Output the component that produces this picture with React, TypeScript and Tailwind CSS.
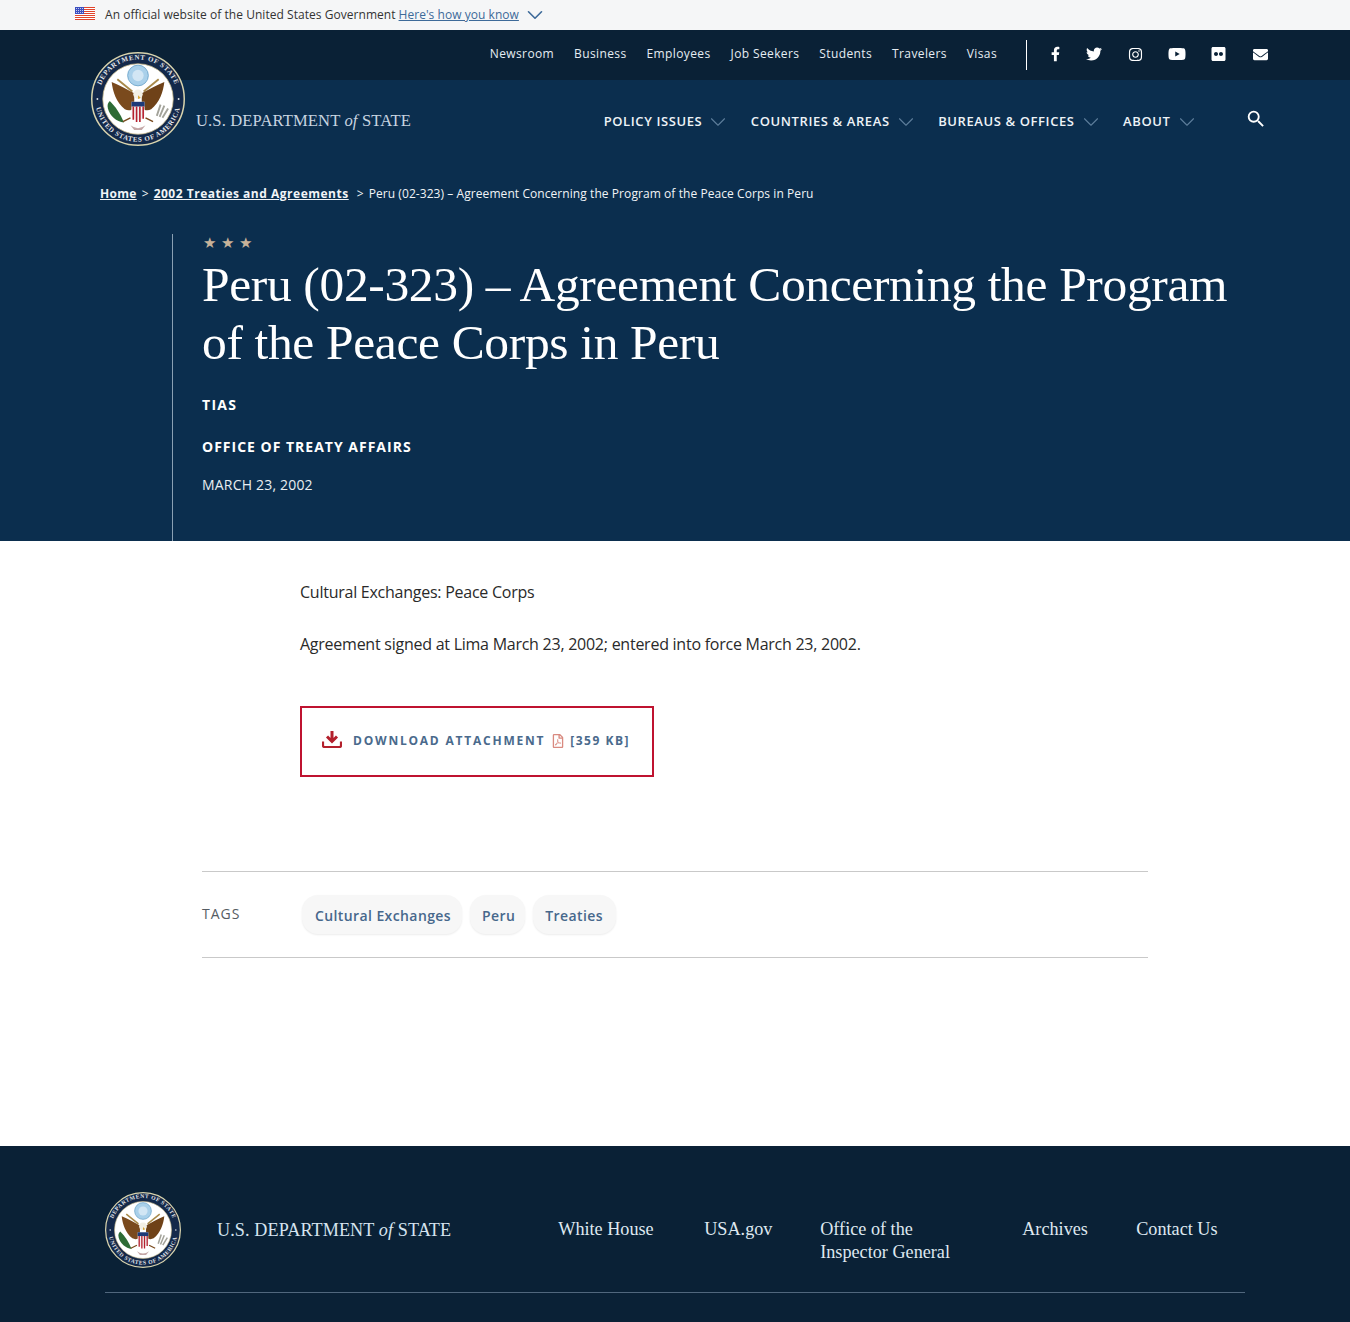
import React from 'react';
import { ChevronDown } from 'lucide-react';
import { FaFacebookF, FaTwitter, FaInstagram, FaYoutube, FaFlickr, FaEnvelope, FaRegFilePdf } from 'react-icons/fa';
import { MdSearch } from 'react-icons/md';

const topLinks = ['Newsroom', 'Business', 'Employees', 'Job Seekers', 'Students', 'Travelers', 'Visas'];
const mainLinks = ['POLICY ISSUES', 'COUNTRIES & AREAS', 'BUREAUS & OFFICES', 'ABOUT'];
const tags = [
  { label: 'Cultural Exchanges', pad: 'pl-[13px] pr-[11px]' },
  { label: 'Peru', pad: 'pl-[12px] pr-[10px]' },
  { label: 'Treaties', pad: 'pl-[12px] pr-[13px]' },
];

function Seal({ id, className }: { id: string; className: string }) {
  return (
    <svg viewBox="0 0 100 100" className={className}>
      <circle cx="50" cy="50" r="49.2" fill="#14294a" stroke="#d8d3ad" strokeWidth="1.6" />
      <circle cx="50" cy="50" r="37.5" fill="#fff" stroke="#c9b98a" strokeWidth="0.8" />
      <defs>
        <path id={id + 't'} d="M 8 50 A 42 42 0 0 1 92 50" />
        <path id={id + 'b'} d="M 4.5 50 A 45.5 45.5 0 0 0 95.5 50" />
      </defs>
      <text fill="#e3e6ea" fontSize="7.4" fontWeight="bold" fontFamily="'Liberation Serif', serif" letterSpacing="0.7">
        <textPath href={'#' + id + 't'} startOffset="50%" textAnchor="middle">DEPARTMENT OF STATE</textPath>
      </text>
      <text fill="#e3e6ea" fontSize="7.4" fontWeight="bold" fontFamily="'Liberation Serif', serif" letterSpacing="0.7">
        <textPath href={'#' + id + 'b'} startOffset="50%" textAnchor="middle">UNITED STATES OF AMERICA</textPath>
      </text>
      <circle cx="6.8" cy="50" r="1" fill="#e3e6ea" />
      <circle cx="93.2" cy="50" r="1" fill="#e3e6ea" />
      <circle cx="50" cy="25" r="11" fill="#a9d0ea" stroke="#6fa6cc" strokeWidth="1" />
      <circle cx="50" cy="25" r="6" fill="#d2e6f4" />
      <path d="M28 29 L44 42 M72 29 L56 42" stroke="#a98a4a" strokeWidth="2" />
      <path d="M46 44 C38 40 30 35 22 32 C23 42 27 54 36 61 C40 63 44 62 46 59 Z" fill="#7a4a1d" />
      <path d="M54 44 C62 40 70 35 78 32 C77 42 73 54 64 61 C60 63 56 62 54 59 Z" fill="#6f4218" />
      <circle cx="50" cy="45" r="5" fill="#f2efe4" />
      <path d="M50 46 L53 49 L50 50 Z" fill="#d7a634" />
      <path d="M43 53 H57 V68 Q50 77 43 68 Z" fill="#f3f3f3" />
      <path d="M43 53 H57 V58 H43 Z" fill="#1d3a78" />
      <path d="M45 58 V72 M48.5 58 V74.5 M52 58 V74.5 M55.5 58 V71" stroke="#b5202f" strokeWidth="1.7" />
      <path d="M18 60 C17 56 18 54 20 52 C26 58 31 65 35 75 C27 74 20 68 18 60 Z" fill="#2d6b35" />
      <path d="M34 74 L42 70 M58 70 L66 74" stroke="#7a4a1d" strokeWidth="1.6" />
      <path d="M70 68 L74 56 M73 69 L78 57 M76 70 L82 60" stroke="#a3a39a" strokeWidth="2" />
      <path d="M42 78 Q50 84 58 78 L54 83 H46 Z" fill="#c4a7a7" />
    </svg>
  );
}

function Flag() {
  return (
    <svg viewBox="0 0 20 13" className="w-5 h-[13px] shrink-0 -mt-[3px]">
      <rect width="20" height="13" fill="#fff" />
      <path d="M0 .5H20M0 2.5H20M0 4.5H20M0 6.5H20M0 8.5H20M0 10.5H20M0 12.5H20" stroke="#e0442c" strokeWidth="1" />
      <rect width="9" height="7" fill="#3c4fc0" />
      <path d="M1 1.5H8M1 3.5H8M1 5.5H8" stroke="#fff" strokeWidth=".7" strokeDasharray="1 1" />
    </svg>
  );
}

function Header() {
  return (
    <header className="relative">
      <div className="h-[30px] bg-[#f5f6f7] flex items-center pl-[75px] text-[12px] text-[#333] tracking-[0.04px]">
        <Flag />
        <span className="ml-[10px]">An official website of the United States Government</span>
        <a className="ml-[3px] text-[#3d6a99] underline">Here's how you know</a>
        <ChevronDown className="ml-[3px] w-[26px] h-[26px] text-[#3d6a99]" strokeWidth={1.5} />
      </div>
      <div className="h-[50px] bg-[#0a2136] flex items-center justify-end pr-[81px] text-white">
        <nav className="flex gap-[20px] text-[12px] tracking-[0.38px] text-[#e6edf3] -mt-[3px]">
          {topLinks.map((l) => (
            <a key={l}>{l}</a>
          ))}
        </nav>
        <div className="w-px h-[30px] bg-white ml-[29px] mr-[24px]" />
        <div className="flex items-center text-white -mt-[2px]">
          <FaFacebookF className="w-[9px] h-[16px]" />
          <FaTwitter className="w-[16px] h-[16px] ml-[26px]" />
          <FaInstagram className="w-[15px] h-[15px] ml-[26px]" />
          <FaYoutube className="w-[18px] h-[18px] ml-[25px]" />
          <FaFlickr className="w-[15px] h-[16px] ml-[25px]" />
          <FaEnvelope className="w-[17px] h-[15px] ml-[26px]" />
        </div>
      </div>
      <div className="absolute left-[91px] top-[52px]">
        <Seal id="top" className="w-[94px] h-[94px]" />
      </div>
    </header>
  );
}

function Hero() {
  return (
    <section className="bg-[#0b2e4e] h-[461px] text-white flex flex-col">
      <div className="flex h-[82px] items-center pl-[196px] pr-[83px] pt-[1px]">
        <div className="font-['Liberation_Serif',serif] text-[16.6px] tracking-[0.12px] text-[#c7d4e0] whitespace-nowrap">
          U.S. DEPARTMENT <i>of</i> STATE
        </div>
        <nav className="ml-auto flex items-center text-[13px] font-semibold tracking-[0.6px] text-[#eef3f7]">
          {mainLinks.map((l) => (
            <a key={l} className="flex items-center mr-[19.5px]">
              {l}
              <ChevronDown className="ml-[3px] w-[26px] h-[26px] text-[#5d7d9a]" strokeWidth={1} />
            </a>
          ))}
          <MdSearch className="ml-[26px] -mt-[5px] w-[22px] h-[22px] text-white" />
        </nav>
      </div>
      <div className="pl-[100px] h-[72px] pt-[21px] text-[12px] leading-[22px] flex text-[#f1f4f7] tracking-[0.07px]">
        <a className="font-bold underline tracking-[0.3px]">Home</a>
        <span className="mx-[5px]">&gt;</span>
        <a className="font-bold underline tracking-[0.51px]">2002 Treaties and Agreements</a>
        <span className="ml-[8px] mr-[5px]">&gt;</span>
        <span>Peru (02-323) – Agreement Concerning the Program of the Peace Corps in Peru</span>
      </div>
      <div className="ml-[172px] border-l border-[#8aa0b3] flex-1 pl-[29px]">
        <div className="flex gap-[5px] text-[15px] leading-[18px] text-[#c7b299] pl-[1px] -mt-[1px]">
          <span>★</span>
          <span>★</span>
          <span>★</span>
        </div>
        <h1 className="font-['Liberation_Serif',serif] text-[49.5px] leading-[58px] mt-[5px] tracking-[-0.35px] text-white">
          Peru (02-323) – Agreement Concerning the Program
          <br />
          of the Peace Corps in Peru
        </h1>
        <p className="mt-[23px] text-[14px] leading-[20px] font-bold tracking-[1.3px]">TIAS</p>
        <p className="mt-[22px] text-[14px] leading-[20px] font-bold tracking-[1px]">OFFICE OF TREATY AFFAIRS</p>
        <p className="mt-[18px] text-[14px] leading-[20px] tracking-[0.19px] text-[#e9eef2]">MARCH 23, 2002</p>
      </div>
    </section>
  );
}

function Main() {
  return (
    <main className="h-[605px] bg-white">
      <div className="pl-[300px] pt-[40px] text-[16px] leading-[22px] text-[#2a2a2a] tracking-[-0.25px]">
        <p>Cultural Exchanges: Peace Corps</p>
        <p className="mt-[30px]">Agreement signed at Lima March 23, 2002; entered into force March 23, 2002.</p>
        <a className="mt-[51px] flex items-center w-[354px] h-[71px] border-2 border-[#bf1330] pl-[20px] pb-[1px] tracking-normal">
          <svg viewBox="0 0 20 18" className="w-[20px] h-[18px] text-[#b3202c] -mt-[4px]">
            <path d="M10 1V11M5 6.5L10 11.5L15 6.5" fill="none" stroke="currentColor" strokeWidth="3" />
            <path d="M1 11.5V15.5Q1 17 2.5 17H17.5Q19 17 19 15.5V11.5" fill="none" stroke="currentColor" strokeWidth="2.2" />
          </svg>
          <span className="ml-[11px] text-[12px] font-bold tracking-[1.78px] text-[#4a6a8c]">DOWNLOAD ATTACHMENT</span>
          <FaRegFilePdf className="ml-[7px] w-[12px] h-[14px] text-[#d98a80]" />
          <span className="ml-[6px] text-[12px] font-bold tracking-[1.5px] text-[#4a6a8c]">[359 KB]</span>
        </a>
      </div>
      <div className="mx-[202px] mt-[94px] h-[87px] border-y border-[#c9c9c9] flex items-center">
        <span className="w-[100px] text-[14px] font-medium tracking-[1px] text-[#555c63] -mt-[2px]">TAGS</span>
        <div className="flex gap-[8px]">
          {tags.map((t) => (
            <a key={t.label} className={`${t.pad} h-[39px] pt-[1px] flex items-center rounded-[16px] bg-[#f7f7f7] shadow-[0_1px_2px_rgba(0,0,0,0.08)] text-[14px] font-semibold tracking-[0.4px] text-[#47688c]`}>
              {t.label}
            </a>
          ))}
        </div>
      </div>
    </main>
  );
}

function Footer() {
  return (
    <footer className="h-[176px] bg-[#0a2136] px-[105px] pt-[46px]">
      <div className="h-[100px] flex items-start">
        <Seal id="foot" className="w-[76px] h-[76px] shrink-0" />
        <div className="ml-[36px] mt-[26px] font-['Liberation_Serif',serif] text-[18.15px] tracking-[0.1px] leading-[24px] text-[#d6e4f0] whitespace-nowrap">
          U.S. DEPARTMENT <i>of</i> STATE
        </div>
        <nav className="ml-[107px] mt-[26px] flex font-['Liberation_Serif',serif] text-[18.2px] leading-[23px] text-[#dfe8f0]">
          <a className="w-[146px]">White House</a>
          <a className="w-[116px]">USA.gov</a>
          <a className="w-[202px]">
            Office of the
            <br />
            Inspector General
          </a>
          <a className="w-[114px]">Archives</a>
          <a>Contact Us</a>
        </nav>
      </div>
      <div className="border-t border-[#51677d]" />
    </footer>
  );
}

export default function App() {
  return (
    <div className="font-['Open_Sans',sans-serif] w-full">
      <Header />
      <Hero />
      <Main />
      <Footer />
    </div>
  );
}
